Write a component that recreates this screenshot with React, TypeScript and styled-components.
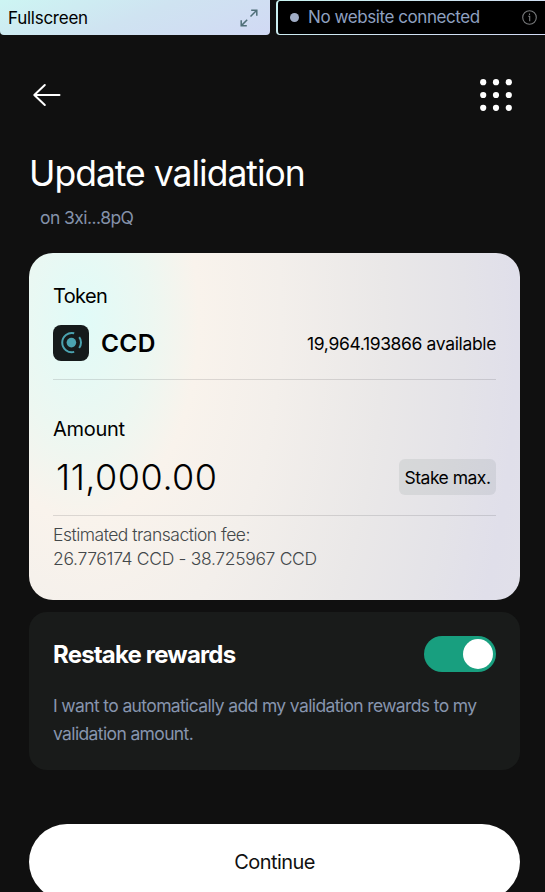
import React from 'react';
import styled, { createGlobalStyle } from 'styled-components';

const GlobalStyle = createGlobalStyle`
  * { box-sizing: border-box; }
  body { margin: 0; background: #101010; overflow: hidden; }
  button { border: 0; padding: 0; background: none; font: inherit; color: inherit; cursor: pointer; }
  svg { display: block; }
`;

const Page = styled.div`
  height: 892px;
  overflow: hidden;
  background: #101010;
  font-family: Inter, 'Liberation Sans', sans-serif;
  font-weight: 400;
  color: #fff;
`;

const TopBar = styled.div`
  display: flex;
  gap: 6px;
  width: 560px;
  height: 35px;
`;

const FullscreenButton = styled.button`
  display: flex;
  align-items: center;
  justify-content: space-between;
  width: 270px;
  padding: 0 12px 0 8px;
  border-radius: 0 0 4px 4px;
  background: linear-gradient(160deg, #cdf5f3 0%, #cfe3f1 50%, #d1d9f4 100%);
  color: #000;
  font-size: 17px;
  letter-spacing: -0.26px;
`;

const ConnectionStatus = styled.div`
  display: flex;
  flex: 1;
  align-items: center;
  padding: 0 22px 1px 12px;
  border: 1px solid transparent;
  border-left-width: 2px;
  border-radius: 4px;
  background:
    linear-gradient(#000, #000) padding-box,
    linear-gradient(160deg, #c9f5f2 0%, #cfe3f1 50%, #d1d9f4 100%) border-box;
  color: #8fa1c0;
  font-size: 17px;
  letter-spacing: -0.42px;
`;

const StatusDot = styled.span`
  width: 9px;
  height: 9px;
  margin-right: 9px;
  border-radius: 50%;
  background: #a0adc6;
`;

const StatusText = styled.span`
  flex: 1;
`;

const Content = styled.main`
  padding: 0 25px 0 29px;
`;

const Header = styled.header`
  display: flex;
  align-items: center;
  justify-content: space-between;
  height: 120px;
  padding: 0 7px 0 3px;
`;

const Title = styled.h1`
  margin: 0;
  font-size: 35.5px;
  font-weight: 400;
  line-height: 38px;
  letter-spacing: -1px;
`;

const Account = styled.div`
  margin: 12px 0 22px 11px;
  color: #8492aa;
  font-size: 17.5px;
  line-height: 26px;
  letter-spacing: -0.55px;
`;

const TokenCard = styled.section`
  height: 347px;
  padding: 31px 24px 0;
  border-radius: 24px;
  background: radial-gradient(
    445px 760px at 52px 65px,
    #e0fbf8 0%,
    #edf7f1 16%,
    #f9f3ec 26.5%,
    #f3efeb 45%,
    #eae8e8 68%,
    #e4e3e8 86%,
    #e0dfea 98%,
    #e2e1ea 112%
  );
  color: #000;
`;

const FieldLabel = styled.div<{ $spacing: string }>`
  font-size: 20px;
  line-height: 24px;
  letter-spacing: ${(p) => p.$spacing};
`;

const FieldRow = styled.div<{ $height: number; $lift: number }>`
  display: flex;
  align-items: center;
  justify-content: space-between;
  height: ${(p) => p.$height}px;
  padding-bottom: ${(p) => p.$lift}px;
  border-bottom: 1px solid rgba(20, 24, 30, 0.13);
`;

const TokenName = styled.div`
  display: flex;
  align-items: center;
  gap: 12px;
  font-size: 24.5px;
  font-weight: 600;
  letter-spacing: 0.3px;
`;

const TokenLogo = styled.span`
  width: 36px;
  height: 36px;
  border-radius: 8px;
  background: #151a1b;
`;

const Available = styled.div`
  font-size: 17.5px;
  letter-spacing: -0.36px;
`;

const AmountBlock = styled.div`
  margin-top: 37px;
`;

const AmountValue = styled.div`
  padding-left: 3px;
  font-size: 36px;
  font-weight: 300;
  letter-spacing: 0.5px;
`;

const StakeMax = styled.button`
  width: 97px;
  height: 36px;
  border-radius: 6px;
  background: rgba(20, 45, 45, 0.08);
  font-size: 17.5px;
  letter-spacing: -0.5px;
`;

const Fee = styled.div`
  margin-top: 7px;
  color: #43484a;
  font-size: 17.5px;
  font-weight: 300;
  line-height: 24px;
`;

const FeeLine = styled.div<{ $spacing: string }>`
  letter-spacing: ${(p) => p.$spacing};
  white-space: nowrap;
`;

const RestakeCard = styled.section`
  height: 158px;
  margin-top: 12px;
  padding: 24px 24px 0;
  border-radius: 18px;
  background: #191b1a;
`;

const RestakeHeader = styled.div`
  display: flex;
  align-items: center;
  justify-content: space-between;
`;

const RestakeTitle = styled.h2`
  margin: 0;
  font-size: 24px;
  font-weight: 700;
  letter-spacing: -0.82px;
`;

const Toggle = styled.button`
  display: flex;
  justify-content: flex-end;
  align-items: center;
  width: 72px;
  height: 36px;
  padding-right: 3px;
  border-radius: 18px;
  background: #189f7f;
`;

const ToggleKnob = styled.span`
  width: 30px;
  height: 30px;
  border-radius: 50%;
  background: #fff;
`;

const RestakeText = styled.p`
  margin: 20px -20px 0 0;
  color: #8795ae;
  font-size: 17.5px;
  line-height: 28px;
  letter-spacing: -0.63px;
`;

const ContinueButton = styled.button`
  display: block;
  width: 100%;
  height: 76px;
  margin-top: 54px;
  border-radius: 38px;
  background: #fff;
  color: #101010;
  font-size: 20px;
  letter-spacing: -0.58px;
`;

const ExpandIcon = () => (
  <svg width="18" height="18" viewBox="0 0 18 18" fill="none" stroke="#4f6f78" strokeWidth="1.5">
    <path d="M10.5 7.5 16.5 1.5M11.2 1.2h5.6v5.6M7.2 10.8 1.4 16.6M1.2 11.2v5.6h5.6" />
  </svg>
);

const InfoIcon = () => (
  <svg width="15" height="15" viewBox="0 0 15 15" fill="none" stroke="#77797b" strokeWidth="1.1">
    <circle cx="7.5" cy="7.5" r="6.8" />
    <path d="M6.2 6.3h1.5v5M7.5 3.5v1.4" />
  </svg>
);

const BackIcon = () => (
  <svg width="30" height="24" viewBox="0 0 30 24" fill="none" stroke="#fff" strokeWidth="2" strokeLinecap="round" strokeLinejoin="round">
    <path d="M12.8 2 2.3 12 12.8 22M2.5 12H27.5" />
  </svg>
);

const MenuIcon = () => (
  <svg width="34" height="34" viewBox="0 0 34 34" fill="#fff">
    {[4.2, 17, 29.8].map((y) =>
      [4.2, 17, 29.8].map((x) => <circle key={`${x}-${y}`} cx={x} cy={y} r="3.1" />),
    )}
  </svg>
);

const ConcordiumIcon = () => (
  <svg width="36" height="36" viewBox="0 0 36 36" fill="none" stroke="#4ba3b0" strokeWidth="2">
    <circle cx="18.4" cy="17.6" r="4.8" fill="#4ba3b0" stroke="none" />
    <path d="M21.2 8.3a9.6 9.6 0 1 0 0 18.6" />
    <path d="M26.2 12.2c2.4 3 2.4 7.8 0 10.8" />
  </svg>
);

export default function App() {
  return (
    <Page>
      <GlobalStyle />
      <TopBar>
        <FullscreenButton>
          Fullscreen
          <ExpandIcon />
        </FullscreenButton>
        <ConnectionStatus>
          <StatusDot />
          <StatusText>No website connected</StatusText>
          <InfoIcon />
        </ConnectionStatus>
      </TopBar>
      <Content>
        <Header>
          <button aria-label="Back"><BackIcon /></button>
          <button aria-label="Menu"><MenuIcon /></button>
        </Header>
        <Title>Update validation</Title>
        <Account>on 3xi...8pQ</Account>
        <TokenCard>
          <FieldLabel $spacing="-0.63px">Token</FieldLabel>
          <FieldRow $height={72} $lift={1}>
            <TokenName>
              <TokenLogo><ConcordiumIcon /></TokenLogo>
              CCD
            </TokenName>
            <Available>19,964.193866 available</Available>
          </FieldRow>
          <AmountBlock>
            <FieldLabel $spacing="-0.3px">Amount</FieldLabel>
            <FieldRow $height={75} $lift={2}>
              <AmountValue>11,000.00</AmountValue>
              <StakeMax>Stake max.</StakeMax>
            </FieldRow>
          </AmountBlock>
          <Fee>
            <FeeLine $spacing="-0.5px">Estimated transaction fee:</FeeLine>
            <FeeLine $spacing="-0.33px">26.776174 CCD - 38.725967 CCD</FeeLine>
          </Fee>
        </TokenCard>
        <RestakeCard>
          <RestakeHeader>
            <RestakeTitle>Restake rewards</RestakeTitle>
            <Toggle role="switch" aria-checked="true" aria-label="Restake rewards">
              <ToggleKnob />
            </Toggle>
          </RestakeHeader>
          <RestakeText>
            I want to automatically add my validation rewards to my
            <br />
            validation amount.
          </RestakeText>
        </RestakeCard>
        <ContinueButton>Continue</ContinueButton>
      </Content>
    </Page>
  );
}
